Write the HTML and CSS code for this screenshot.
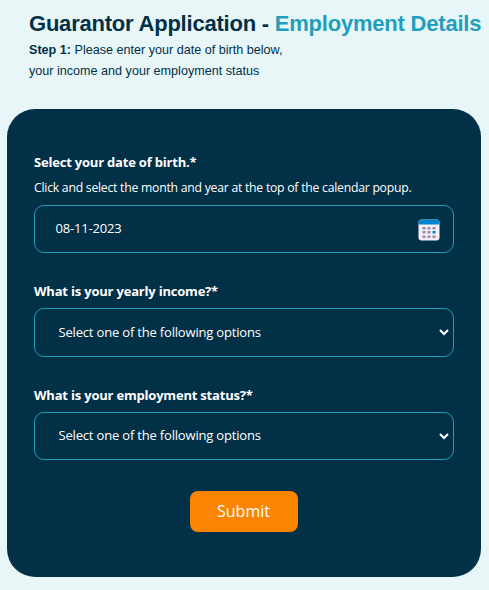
FILE: index.html
```html
<!DOCTYPE html>
<html lang="en">
<head>
<meta charset="utf-8">
<title>Guarantor Application</title>
<link rel="stylesheet" href="styles.css">
</head>
<body>
<header class="intro">
  <h1>Guarantor Application - <span>Employment Details</span></h1>
  <p><b>Step 1:</b> Please enter your date of birth below,<br>your income and your employment status</p>
</header>
<form class="card">
  <div class="label">Select your date of birth.*</div>
  <div class="hint">Click and select the month and year at the top of the calendar popup.</div>
  <div class="field date"><span>08-11-2023</span>
    <svg class="calendar" width="22" height="22" viewBox="0 0 22 22"><rect x=".5" y=".5" width="21" height="21" rx="3" fill="#f3eef8"/><path d="M.5 5.5v-2a3 3 0 0 1 3-3h15a3 3 0 0 1 3 3v2z" fill="#0084ce"/><g fill="#998ea4"><path d="M4.5 8h3v2.5h-3zM9.5 8h3v2.5h-3zM14.5 8h3v2.5h-3zM4.5 12h3v2.5h-3zM9.5 12h3v2.5h-3zM4.5 16.5h3V19h-3zM9.5 16.5h3V19h-3zM14.5 16.5h3V19h-3z"/></g><path d="M14.5 12h3v2.5h-3z" fill="#0084ce"/></svg>
  </div>
  <div class="label income">What is your yearly income?*</div>
  <div class="field select"><span>Select one of the following options</span><svg class="chevron" width="10" height="7" viewBox="0 0 10 7"><path d="M1 1l4 4 4-4"/></svg></div>
  <div class="label status">What is your employment status?*</div>
  <div class="field select last"><span>Select one of the following options</span><svg class="chevron" width="10" height="7" viewBox="0 0 10 7"><path d="M1 1l4 4 4-4"/></svg></div>
  <button type="button">Submit</button>
</form>
</body>
</html>
```
FILE: styles.css
```css
* { box-sizing: border-box; }
body { margin: 0; height: 590px; background: #e8f6f8; color: #023047; overflow: hidden; }
.intro { height: 109px; padding: 10px 0 0 29px; font-family: "Liberation Sans", sans-serif; }
h1 { margin: 0; font-size: 22px; line-height: 27px; letter-spacing: -.215px; white-space: nowrap; }
h1 span { color: #219ebc; }
.intro p { margin: 3px 0 0; font-size: 12.6px; line-height: 21px; }
.card { margin: 0 8px 0 7px; height: 468px; padding: 42px 27px 0; border-radius: 28px; background: #023047; color: #fff; font-family: "Open Sans", sans-serif; }
.label { font-size: 13px; font-weight: 700; line-height: 22px; letter-spacing: -.2px; }
.hint { margin-top: 5px; font-size: 12.2px; line-height: 20px; letter-spacing: -.23px; }
.field { display: flex; align-items: center; justify-content: space-between; height: 48px; border: 1px solid #219ebc; border-radius: 10px; font-size: 13px; letter-spacing: -.18px; }
.field span { padding-bottom: 2px; }
.date { margin-top: 7px; padding: 0 13.5px 0 20.5px; }
.calendar { margin-top: 1px; }
.income { margin-top: 27px; }
.select { margin-top: 6px; padding: 0 4px 0 23.5px; height: 49px; }
.status { margin-top: 27px; }
.last { height: 48px; }
.chevron { fill: none; stroke: #fff; stroke-width: 2; }
button { display: block; width: 108px; height: 41px; margin: 31px auto 0; padding: 0 1px 1px 0; border: 0; border-radius: 8px; background: #fb8500; color: #fff; font: 16px "Open Sans", sans-serif; }
```
